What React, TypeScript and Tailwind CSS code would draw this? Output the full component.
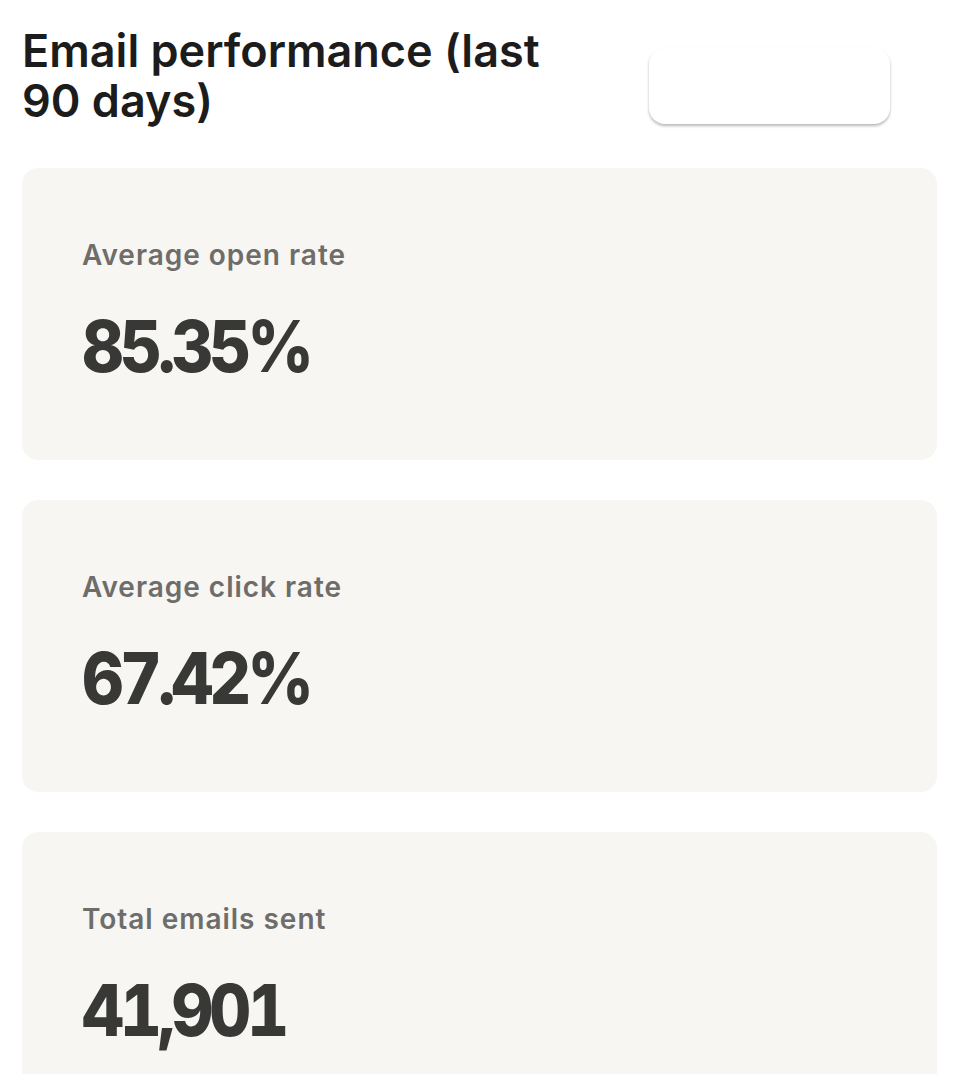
import React from 'react';

interface Stat {
  label: string;
  value: string;
}

const STATS: Stat[] = [
  { label: 'Average open rate', value: '85.35%' },
  { label: 'Average click rate', value: '67.42%' },
  { label: 'Total emails sent', value: '41,901' },
];

export default function App() {
  return (
    <div className="min-h-screen bg-white pl-[22px] pr-[27px] pt-[26px] font-['Inter','Noto_Sans',sans-serif]">
      {/* Header */}
      <div className="flex items-start justify-between">
        <h1 className="max-w-[560px] text-[45px] font-semibold leading-[50px] text-[#1c1c1c]">
          Email performance (last 90 days)
        </h1>
        <button className="mr-[47px] mt-[22px] h-[76px] w-[241px] shrink-0 rounded-[16px] bg-white shadow-[0_2px_3px_rgba(0,0,0,0.28)]" />
      </div>

      {/* Stat cards */}
      <div className="mt-[42px] flex flex-col gap-[40px]">
        {STATS.map((s) => (
          <div key={s.label} className="rounded-[16px] bg-[#f7f6f3] pl-[60px] pt-[69px] pb-[78px]">
            <p className="text-[28px] font-semibold leading-[36px] tracking-[0.035em] text-[#6e6d6a]">{s.label}</p>
            <p className="mt-[37px] text-[72px] leading-[72px]">
              <span className="inline-block origin-left scale-x-[0.9] font-extrabold tabular-nums tracking-[-0.06em] text-[#383836]">
                {s.value}
              </span>
            </p>
          </div>
        ))}
      </div>
    </div>
  );
}
